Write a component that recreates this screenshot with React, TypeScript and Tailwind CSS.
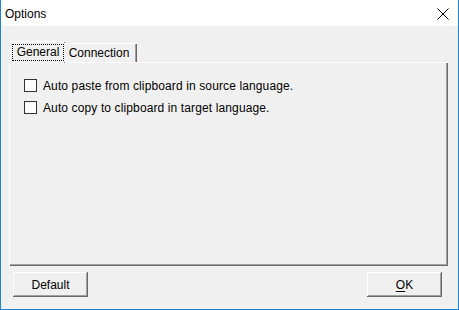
import { useState } from "react";

const raised =
  "shadow-[inset_-1px_-1px_#696969,inset_1px_1px_#ffffff,inset_-2px_-2px_#a0a0a0]";

const App = () => {
  const [tab, setTab] = useState("general");
  const [autoPaste, setAutoPaste] = useState(false);
  const [autoCopy, setAutoCopy] = useState(false);

  return (
    <div
      className="w-[459px] h-[310px] flex flex-col bg-[#f0f0f0] border border-t-0 border-[#1883d7] text-[12px] text-black"
      style={{ fontFamily: '"Liberation Sans", Arial, sans-serif' }}
    >
      {/* title bar */}
      <div className="h-[26px] bg-white flex items-center justify-between pl-[4px] pr-[9px]">
        <span className="pt-[1px]">Options</span>
        <svg width="12" height="12" viewBox="0 0 12 12" className="mt-[1px]">
          <path d="M0.5 0.5 L11.5 11.5 M11.5 0.5 L0.5 11.5" stroke="#000" strokeWidth="1" />
        </svg>
      </div>

      <div className="flex flex-col pl-[8px] pt-[15px]">
        {/* tabs */}
        <div className="flex items-end h-[21px] pl-[1px] relative z-10">
          <button
            onClick={() => setTab("general")}
            className="h-[22px] w-[55px] -mb-[1px] bg-[#f0f0f0] border-t border-l border-white shadow-[inset_-1px_0_#696969] flex items-start justify-center pt-[2px]"
          >
            <span className="border border-dotted border-black px-[4px] leading-[15px]">General</span>
          </button>
          <button
            onClick={() => setTab("connection")}
            className="h-[19px] w-[73px] -ml-[1px] bg-[#f0f0f0] border-t border-white shadow-[inset_-1px_0_#696969,inset_-2px_0_#a0a0a0] flex items-start justify-center pt-[2px] pr-[3px]"
          >
            <span className="leading-[15px]">Connection</span>
          </button>
        </div>

        {/* panel */}
        <div className="w-[439px] h-[204px] border-t border-l border-white shadow-[inset_-1px_-1px_#696969,inset_-2px_-2px_#a0a0a0] flex flex-col gap-[9px] pl-[14px] pt-[16px]">
          {tab === "general" && (
            <>
              <label className="flex items-center gap-[6px] h-[13px]">
                <span
                  onClick={() => setAutoPaste(!autoPaste)}
                  className="w-[13px] h-[13px] border border-[#333333] bg-white flex items-center justify-center text-[10px] leading-none"
                >
                  {autoPaste ? "✓" : ""}
                </span>
                <span className="tracking-[0.12px]">Auto paste from clipboard in source language.</span>
              </label>
              <label className="flex items-center gap-[6px] h-[13px]">
                <span
                  onClick={() => setAutoCopy(!autoCopy)}
                  className="w-[13px] h-[13px] border border-[#333333] bg-white flex items-center justify-center text-[10px] leading-none"
                >
                  {autoCopy ? "✓" : ""}
                </span>
                <span className="tracking-[0.12px]">Auto copy to clipboard in target language.</span>
              </label>
            </>
          )}
        </div>

        {/* buttons */}
        <div className="flex justify-between mt-[6px] pl-[4px] pr-[16px]">
          <button className={`w-[75px] h-[25px] bg-[#f0f0f0] ${raised}`}>Default</button>
          <button className={`w-[75px] h-[25px] bg-[#f0f0f0] ${raised}`}>
            <span className="underline underline-offset-2">O</span>K
          </button>
        </div>
      </div>
    </div>
  );
};

export default App;
